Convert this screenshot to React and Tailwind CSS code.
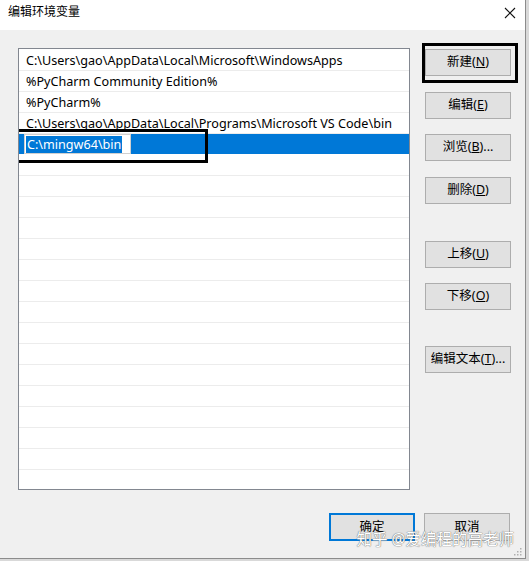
import React from 'react'

const PATHS = [
  'C:\\Users\\gao\\AppData\\Local\\Microsoft\\WindowsApps',
  '%PyCharm Community Edition%',
  '%PyCharm%',
  'C:\\Users\\gao\\AppData\\Local\\Programs\\Microsoft VS Code\\bin',
]

const FONT = '[font-family:"Noto_Sans","Noto_Sans_CJK_SC",sans-serif]'

function Btn({ label, hot, tail = '', primary = false, className = '' }) {
  return (
    <button
      className={`flex h-[27px] w-[86px] items-center justify-center bg-[#e1e1e1] text-[12.5px] text-black ${
        primary ? 'border-2 border-[#0078d7]' : 'border border-[#adadad]'
      } ${className}`}
    >
      {label}
      {hot && (
        <>
          (<span className="underline">{hot}</span>)
        </>
      )}
      {tail}
    </button>
  )
}

export default function App() {
  const empties = Array.from({ length: 17 })
  return (
    <div className={`flex h-[561px] w-[529px] bg-[#d9d9d9] ${FONT}`}>
      <div className="relative flex h-[559px] w-[526px] flex-col border-r border-b border-[#8c8c8c]">
        {/* title bar */}
        <div className="flex h-[30px] items-start justify-between bg-white pl-[8px] pr-[9px] pt-[3px]">
          <span className="text-[12px] text-black">编辑环境变量</span>
          <svg width="12" height="12" viewBox="0 0 12 12" className="mt-[4px]">
            <path d="M1 1 L11 11 M11 1 L1 11" stroke="#111" strokeWidth="1.1" />
          </svg>
        </div>

        {/* body */}
        <div className="flex flex-1 flex-col bg-[#f0f0f0]">
          <div className="flex pt-[18px] pl-[18px]">
            {/* list */}
            <div className="h-[442px] w-[392px] overflow-hidden border border-[#828790] bg-white pt-[1px]">
              {PATHS.map((p) => (
                <div
                  key={p}
                  className="flex h-[21px] items-center border-b border-[#ececec] pl-[7px] pt-[2px] text-[12.6px] text-black"
                >
                  {p}
                </div>
              ))}
              <div className="relative flex h-[20px] items-center bg-[#0078d7] pl-[5px]">
                <div className="flex h-[20px] w-[107px] items-center border border-[#d0d0d0] bg-white pl-[1px]">
                  <span className="bg-[#0078d7] px-[1px] text-[12.6px] leading-[17px] text-white">
                    C:\mingw64\bin
                  </span>
                </div>
                <div className="absolute left-[-5px] top-[-5px] h-[34px] w-[194px] border-[3px] border-black" />
              </div>
              <div className="h-[1px]" />
              {empties.map((_, i) => (
                <div key={i} className="h-[21px] border-b border-[#ececec]" />
              ))}
            </div>

            {/* buttons */}
            <div className="ml-[15px] flex flex-col pt-[1px]">
              <div className="relative">
                <Btn label="新建" hot="N" />
                <div className="absolute left-[-3px] top-[-6px] h-[40px] w-[96px] border-[3px] border-black" />
              </div>
              <Btn label="编辑" hot="E" className="mt-[16px]" />
              <Btn label="浏览" hot="B" tail="..." className="mt-[15px]" />
              <Btn label="删除" hot="D" className="mt-[16px]" />
              <Btn label="上移" hot="U" className="mt-[37px]" />
              <Btn label="下移" hot="O" className="mt-[15px]" />
              <Btn label="编辑文本" hot="T" tail="..." className="mt-[36px]" />
            </div>
          </div>

          <div className="mt-[23px] flex justify-end gap-[9px] pr-[15px]">
            <Btn label="确定" primary className="h-[28px]" />
            <Btn label="取消" className="h-[28px]" />
          </div>
        </div>

        {/* watermark */}
        <div className="absolute bottom-[7px] right-[11px] text-[15.5px] text-white [text-shadow:0_0_1px_#6e6e6e,0_0_1px_#6e6e6e]">
          知乎 @爱编程的高老师
        </div>

        {/* size grip */}
        <svg width="10" height="10" viewBox="0 0 10 10" className="absolute bottom-[2px] right-[3px]">
          {[
            [8, 2],
            [8, 5],
            [5, 5],
            [8, 8],
            [5, 8],
            [2, 8],
          ].map(([x, y]) => (
            <rect key={`${x}-${y}`} x={x} y={y} width="1.5" height="1.5" fill="#b0b0b0" />
          ))}
        </svg>
      </div>
    </div>
  )
}
